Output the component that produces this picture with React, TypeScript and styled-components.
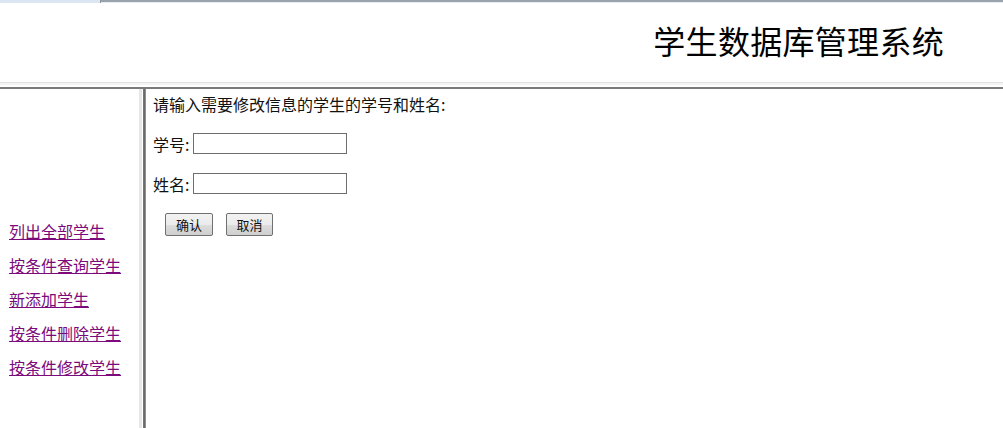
import React from "react";
import styled, { createGlobalStyle } from "styled-components";

const Global = createGlobalStyle`
  html, body { margin: 0; padding: 0; background: #ffffff; }
  body { font-family: "Liberation Serif", "Noto Sans CJK SC", serif; color: #000; }
  #root { width: 1003px; height: 428px; overflow: hidden; }
`;

const Page = styled.div`
  width: 1003px;
  height: 428px;
  display: flex;
  flex-direction: column;
  background: #fff;
`;

const TopStrip = styled.div`
  height: 3px;
  display: flex;
`;

const Tab = styled.div`
  width: 100px;
  background: #dce6f3;
  border-right: 1px solid #8d96a0;
`;

const StripRest = styled.div`
  flex: 1;
  border-top: 2px solid #9aa2ab;
  background: #e4ecf6;
`;

const Header = styled.div`
  height: 79px;
  display: flex;
  align-items: center;
  justify-content: flex-end;
  padding-right: 59px;
  border-bottom: 1px solid #e2e2e2;
`;

const Title = styled.h1`
  margin: 0;
  font-family: "Liberation Serif", "Noto Sans CJK SC", serif;
  font-weight: 400;
  font-size: 32px;
  line-height: 36px;
  letter-spacing: 0.3px;
  color: #000;
`;

const HSplit = styled.div`
  height: 6px;
  background: #fff;
  border-bottom: 2px solid #7a7a7a;
  box-sizing: border-box;
  border-top: 2px solid #f4f4f4;
`;

const Body = styled.div`
  flex: 1;
  display: flex;
`;

const Side = styled.nav`
  width: 139px;
  padding: 133px 0 0 9px;
  box-sizing: border-box;
  display: flex;
  flex-direction: column;
  gap: 16px;
`;

const NavLink = styled.a`
  font-family: "Noto Sans CJK SC", sans-serif;
  font-size: 16px;
  line-height: 18px;
  color: #7b0a7b;
  text-decoration: underline;
  text-underline-offset: 1px;
  white-space: nowrap;
  cursor: pointer;
`;

const VSplit = styled.div`
  width: 7px;
  display: flex;
`;

const VLight = styled.div`
  width: 3px;
  background: #e6e6e6;
`;

const VGap = styled.div`
  width: 1px;
  background: #fff;
`;

const VDark = styled.div`
  width: 3px;
  background: linear-gradient(to right, #7a7a7a, #6a6a6a, #a0a0a0);
`;

const Main = styled.main`
  flex: 1;
  padding: 5px 0 0 7px;
  display: flex;
  flex-direction: column;
`;

const Prompt = styled.div`
  font-family: "Noto Sans CJK SC", sans-serif;
  font-size: 16px;
  line-height: 20px;
  color: #111;
`;

const Field = styled.label`
  display: flex;
  align-items: center;
  gap: 4px;
  margin-top: ${(p: { $top: number }) => p.$top}px;
  font-family: "Noto Sans CJK SC", sans-serif;
  font-size: 16px;
  line-height: 20px;
  color: #111;
`;

const Input = styled.input`
  width: 154px;
  height: 21px;
  box-sizing: border-box;
  border: 1px solid #6e6e6e;
  background: #fff;
  padding: 0 2px;
  margin: 0;
`;

const Buttons = styled.div`
  display: flex;
  gap: 13px;
  margin: 19px 0 0 12px;
`;

const Btn = styled.button`
  width: ${(p: { $w: number }) => p.$w}px;
  height: 23px;
  box-sizing: border-box;
  border: 1px solid #707070;
  border-radius: 2px;
  background: linear-gradient(to bottom, #f2f2f2 0%, #ebebeb 50%, #dddddd 51%, #cfcfcf 100%);
  font-family: "Noto Sans CJK SC", sans-serif;
  font-size: 13px;
  line-height: 19px;
  color: #111;
  padding: 0;
  margin: 0;
`;

const links = ["列出全部学生", "按条件查询学生", "新添加学生", "按条件删除学生", "按条件修改学生"];

export default function App() {
  return (
    <Page>
      <Global />
      <TopStrip>
        <Tab />
        <StripRest />
      </TopStrip>
      <Header>
        <Title>学生数据库管理系统</Title>
      </Header>
      <HSplit />
      <Body>
        <Side>
          {links.map((l) => (
            <NavLink key={l}>{l}</NavLink>
          ))}
        </Side>
        <VSplit>
          <VLight />
          <VGap />
          <VDark />
        </VSplit>
        <Main>
          <Prompt>请输入需要修改信息的学生的学号和姓名:</Prompt>
          <Field $top={19}>
            学号:
            <Input type="text" />
          </Field>
          <Field $top={19}>
            姓名:
            <Input type="text" />
          </Field>
          <Buttons>
            <Btn $w={48}>确认</Btn>
            <Btn $w={47}>取消</Btn>
          </Buttons>
        </Main>
      </Body>
    </Page>
  );
}
